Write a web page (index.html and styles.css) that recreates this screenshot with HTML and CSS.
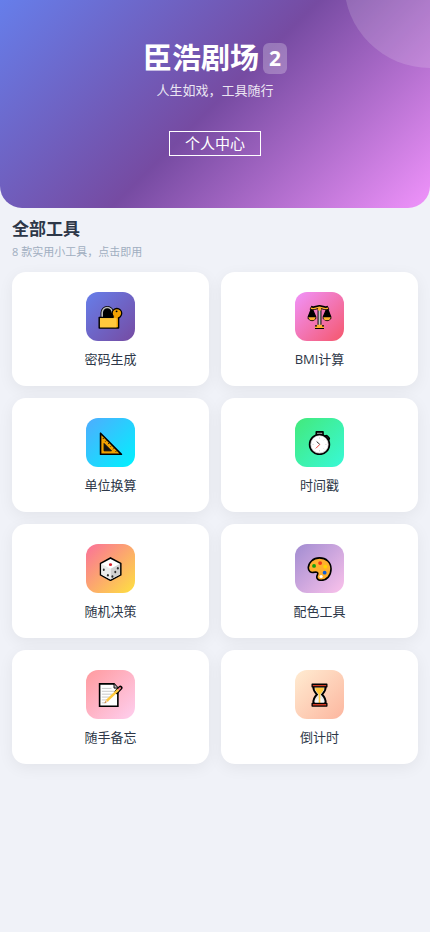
FILE: index.html
```html
<!DOCTYPE html>
<html lang="zh-CN">
<head>
    <meta charset="UTF-8">
    <meta name="viewport" content="width=device-width, initial-scale=1.0">
    <title>臣浩剧场2</title>
    <link rel="stylesheet" href="styles.css">
</head>
<body>
    <header class="header">
        <h1 class="title">臣浩剧场<span class="badge">2</span></h1>
        <p class="subtitle">人生如戏，工具随行</p>
        <a class="user-btn" href="#user">个人中心</a>
    </header>

    <main class="main">
        <h2 class="section-title">全部工具</h2>
        <p class="section-desc">8 款实用小工具，点击即用</p>

        <div class="tools">
            <a class="card" href="#password">
                <span class="icon icon-password">
                    <svg viewBox="0 0 78 78" aria-hidden="true">
                        <path d="M12 42V27a17 17 0 0 1 34 0v15z" fill="#000" stroke="#000" stroke-width="8"/>
                        <path d="M13 42V27a16 16 0 0 1 32 0" fill="none" stroke="#bdbdbd" stroke-width="5"/>
                        <path d="M4 42h60v33H4z" fill="#f2a100" stroke="#000" stroke-width="5" stroke-linejoin="round"/>
                        <circle cx="59" cy="29" r="15" fill="#f2a100" stroke="#000" stroke-width="4"/>
                        <path d="M49 38h13v34H49z" fill="#f2a100"/>
                        <path d="M6 44h52v29H6z" fill="#ffc83d"/>
                        <circle cx="58" cy="23" r="3" fill="#000"/>
                    </svg>
                </span>
                <span class="name">密码生成</span>
            </a>
            <a class="card" href="#bmi">
                <span class="icon icon-bmi">
                    <svg viewBox="0 0 78 78" aria-hidden="true">
                        <path d="M39 6v60M11 11q7 4 13 1l15-3 15 3q6 3 13-1M25 72h28" fill="none" stroke="#000" stroke-width="12" stroke-linejoin="round"/>
                        <path d="M15 12L4 40v5q12 14 23 0v-5zM63 12L51 40v5q12 14 23 0v-5z" fill="#000" stroke="#000" stroke-width="4" stroke-linejoin="round"/>
                        <path d="M4 41h23q-2 10-11 10T4 41zM51 41h23q-2 10-12 10T51 41z" fill="#ffb02e"/>
                        <path d="M12 13q8 3 15 0l12-3 12 3q7 3 15 0" fill="none" stroke="#ffb02e" stroke-width="4"/>
                        <path d="M39 12v56" stroke="#c4c4c4" stroke-width="6"/>
                        <circle cx="39" cy="16" r="5" fill="#ffb02e"/>
                        <path d="M31 65h16v5h6v5H25v-5h6z" fill="#ffb02e"/>
                    </svg>
                </span>
                <span class="name">BMI计算</span>
            </a>
            <a class="card" href="#unit">
                <span class="icon icon-unit">
                    <svg viewBox="0 0 78 78" aria-hidden="true">
                        <path d="M8 10v66h65z" fill="#f2a100" stroke="#000" stroke-width="5" stroke-linejoin="round"/>
                        <path d="M19 42v23h23z" fill="#111" stroke="#111" stroke-width="3" stroke-linejoin="round"/>
                        <path d="M18 25l-3 3M26 33l-3 3M34 41l-3 3M42 49l-3 3M50 57l-3 3M58 65l-3 3" stroke="#111" stroke-width="3"/>
                    </svg>
                </span>
                <span class="name">单位换算</span>
            </a>
            <a class="card" href="#timestamp">
                <span class="icon icon-timestamp">
                    <svg viewBox="0 0 78 78" aria-hidden="true">
                        <path d="M29 6h21v14H29z" fill="#999" stroke="#000" stroke-width="5" stroke-linejoin="round"/>
                        <path d="M60 21l6 6" stroke="#000" stroke-width="12" stroke-linecap="round"/>
                        <path d="M61 22l4 4" stroke="#777" stroke-width="4" stroke-linecap="round"/>
                        <circle cx="39" cy="45" r="31" fill="#c8c8c8" stroke="#000" stroke-width="5"/>
                        <circle cx="39" cy="45" r="26" fill="#fff"/>
                        <path d="M39 23v4M39 63v4M17 45h4M57 45h4M24 30l2 2M54 30l-2 2M24 60l2-2M54 60l-2-2" stroke="#bbb" stroke-width="2"/>
                        <path d="M30 36l10 9" stroke="#222" stroke-width="3"/>
                        <path d="M40 45L28 57" stroke="#f03a2e" stroke-width="3"/>
                    </svg>
                </span>
                <span class="name">时间戳</span>
            </a>
            <a class="card" href="#random">
                <span class="icon icon-random">
                    <svg viewBox="0 0 78 78" aria-hidden="true">
                        <path d="M39 6l32 17v36L39 76 8 59V23z" fill="#fff" stroke="#000" stroke-width="5" stroke-linejoin="round"/>
                        <path d="M39 40l30-16v34L39 73z" fill="#d2d2d2"/>
                        <path d="M10 24l29 16v33L10 58z" fill="#ececec"/>
                        <ellipse cx="39" cy="27" rx="5" ry="4" fill="#d7202c"/>
                        <g fill="#333">
                            <ellipse cx="18" cy="43" rx="3" ry="4"/>
                            <ellipse cx="31" cy="60" rx="3" ry="4"/>
                            <ellipse cx="62" cy="38" rx="3" ry="4"/>
                            <ellipse cx="54" cy="50" rx="3" ry="4"/>
                            <ellipse cx="45" cy="64" rx="3" ry="4"/>
                        </g>
                    </svg>
                </span>
                <span class="name">随机决策</span>
            </a>
            <a class="card" href="#color">
                <span class="icon icon-color">
                    <svg viewBox="0 0 78 78" aria-hidden="true">
                        <path d="M39 6C19 6 4 21 4 37c0 11 8 16 17 14l7-1c6 0 7 5 4 10-4 8 1 16 12 16 18 0 31-15 31-36C75 20 60 6 39 6z" fill="#ffb02e" stroke="#000" stroke-width="5"/>
                        <circle cx="22" cy="31" r="6" fill="#13a10e"/>
                        <circle cx="41" cy="22" r="6" fill="#f03a17"/>
                        <circle cx="57" cy="33" r="6" fill="#ffd600"/>
                        <circle cx="55" cy="52" r="6" fill="#0f5fd7"/>
                        <circle cx="44" cy="64" r="5" fill="#fff"/>
                    </svg>
                </span>
                <span class="name">配色工具</span>
            </a>
            <a class="card" href="#memo">
                <span class="icon icon-memo">
                    <svg viewBox="0 0 78 78" aria-hidden="true">
                        <path d="M5 6h45l12 13v57H5z" fill="#fff" stroke="#000" stroke-width="5"/>
                        <path d="M50 6v13h12" fill="#bbb" stroke="#000" stroke-width="3"/>
                        <path d="M12 20h30M12 29h38M12 38h36M12 47h32M12 56h22M12 65h14" stroke="#aaa" stroke-width="2"/>
                        <path d="M58 31L70 18" stroke="#000" stroke-width="13" stroke-linecap="round"/>
                        <path d="M20 66l5-12 8 7z" fill="#f6d3a8"/>
                        <path d="M28 58l36-34" stroke="#ffc83d" stroke-width="8"/>
                        <path d="M65 23l4-4" stroke="#f8818c" stroke-width="6" stroke-linecap="round"/>
                        <path d="M20 66l3-6 3 3z" fill="#c26d2d"/>
                    </svg>
                </span>
                <span class="name">随手备忘</span>
            </a>
            <a class="card" href="#countdown">
                <span class="icon icon-countdown">
                    <svg viewBox="0 0 78 78" aria-hidden="true">
                        <path d="M20 12h38c2 14-5 20-11 27 6 6 13 14 11 28H20c-2-14 5-22 11-28-6-7-13-13-11-27z" fill="#e6e6e6" stroke="#000" stroke-width="6"/>
                        <path d="M25 17h28c0 9-5 14-12 21h-4c-7-7-12-12-12-21z" fill="#ffc83d"/>
                        <path d="M24 66q3-12 15-19 12 7 15 19z" fill="#f7f7f7"/>
                        <path d="M39 36v30" stroke="#ffc83d" stroke-width="5"/>
                        <path d="M16 7h46v8H16zM16 67h46v8H16z" fill="#d13a24" stroke="#000" stroke-width="4" stroke-linejoin="round"/>
                    </svg>
                </span>
                <span class="name">倒计时</span>
            </a>
        </div>
    </main>
</body>
</html>
```
FILE: styles.css
```css
* {
    margin: 0;
    padding: 0;
    box-sizing: border-box;
}
body {
    min-height: 100vh;
    background: #f0f2f8;
    color: #2d3748;
    font-family: "Open Sans", "Noto Sans CJK SC", sans-serif;
}
a {
    color: inherit;
    text-decoration: none;
}

.header {
    position: relative;
    overflow: hidden;
    display: flex;
    flex-direction: column;
    align-items: center;
    padding: 36px 16px 52px;
    background: linear-gradient(135deg, #667eea 0%, #764ba2 50%, #f093fb 100%);
    border-radius: 0 0 22px 22px;
    color: #fff;
}
.header::before {
    content: "";
    position: absolute;
    top: -50%;
    right: -20%;
    width: 40%;
    aspect-ratio: 1;
    border-radius: 50%;
    background: rgba(255, 255, 255, 0.15);
}
.title {
    display: flex;
    align-items: center;
    gap: 4px;
    font-size: 29px;
    line-height: 44px;
    font-weight: 700;
}
.badge {
    padding: 0 6px;
    border-radius: 6px;
    background: rgba(255, 255, 255, 0.25);
    font-size: 21px;
    line-height: 31px;
}
.subtitle {
    font-size: 13px;
    line-height: 20px;
    opacity: 0.85;
}
.user-btn {
    margin-top: 31px;
    padding: 0 15px;
    border: 1px solid #fff;
    font-size: 15px;
    line-height: 23px;
}

.main {
    padding: 8px 12px 24px;
}
.section-title {
    font-size: 17px;
    line-height: 26px;
    font-weight: 700;
}
.section-desc {
    margin-bottom: 10px;
    font-size: 11px;
    line-height: 20px;
    color: #a0aec0;
}

.tools {
    display: grid;
    grid-template-columns: repeat(2, 1fr);
    gap: 12px;
}
.card {
    display: flex;
    flex-direction: column;
    align-items: center;
    gap: 8px;
    padding: 20px 12px 17px;
    background: #fff;
    border-radius: 14px;
    box-shadow: 0 4px 16px rgba(0, 0, 0, 0.06);
}
.icon {
    display: flex;
    align-items: center;
    justify-content: center;
    width: 49px;
    height: 49px;
    border-radius: 12px;
}
.icon svg {
    width: 25px;
    height: 25px;
}
.name {
    font-size: 13px;
    line-height: 20px;
}

.icon-password { background: linear-gradient(135deg, #667eea, #764ba2); }
.icon-bmi { background: linear-gradient(135deg, #f093fb, #f5576c); }
.icon-unit { background: linear-gradient(135deg, #4facfe, #00f2fe); }
.icon-timestamp { background: linear-gradient(135deg, #43e97b, #38f9d7); }
.icon-random { background: linear-gradient(135deg, #fa709a, #fee140); }
.icon-color { background: linear-gradient(135deg, #a18cd1, #fbc2eb); }
.icon-memo { background: linear-gradient(135deg, #ff9a9e, #fecfef); }
.icon-countdown { background: linear-gradient(135deg, #ffecd2, #fcb69f); }
```
